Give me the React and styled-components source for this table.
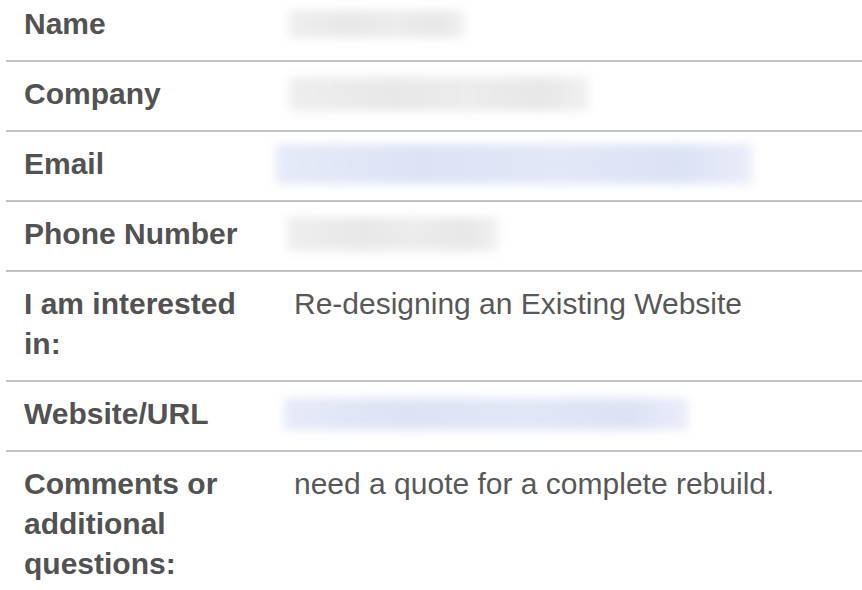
import React from "react";
import styled, { createGlobalStyle } from "styled-components";

const GlobalStyle = createGlobalStyle`
  html, body {
    margin: 0;
    padding: 0;
    background: #ffffff;
    overflow: hidden;
  }
  * {
    box-sizing: border-box;
  }
`;

const Table = styled.div`
  margin: -8px 0 0 6px;
  width: 880px;
  font-family: "Liberation Sans", Arial, Helvetica, sans-serif;
  font-size: 30px;
  line-height: 40px;
  color: #555555;
`;

const Row = styled.div`
  display: grid;
  grid-template-columns: 270px 1fr;
  border-bottom: 2px solid #c2c2c2;
`;

const Label = styled.div`
  padding: 12px 20px 16px 18px;
  font-weight: 700;
  color: #525252;
`;

const Value = styled.div`
  padding: 12px 20px 16px 18px;
  font-weight: 400;
  color: #585858;
`;

const Redacted = styled.div`
  height: 40px;
  display: flex;
  align-items: center;
  margin-left: ${(p) => p.$shift || 0}px;
`;

const Smudge = styled.div`
  width: ${(p) => p.$width}px;
  height: ${(p) => p.$height || 28}px;
  border-radius: 4px;
  background: ${(p) =>
    p.$link
      ? "linear-gradient(90deg, #e6eaf8 0%, #dde3f5 30%, #e2e7f7 60%, #dce2f5 85%, #eaedf9 100%)"
      : "linear-gradient(90deg, #eeeeee 0%, #e8e8e8 35%, #ececec 60%, #e7e7e7 85%, #f1f1f1 100%)"};
  filter: blur(5px);
`;

const rows = [
  { label: "Name", blur: { width: 176, shift: -5 } },
  { label: "Company", blur: { width: 300, shift: -5, height: 34 } },
  { label: "Email", blur: { width: 476, shift: -18, height: 40, link: true } },
  { label: "Phone Number", blur: { width: 212, shift: -7, height: 34 } },
  { label: "I am interested in:", text: "Re-designing an Existing Website" },
  { label: "Website/URL", blur: { width: 404, shift: -10, height: 32, link: true } },
  {
    label: "Comments or additional questions:",
    text: "need a quote for a complete rebuild.",
  },
];

export default function App() {
  return (
    <>
      <GlobalStyle />
      <Table>
        {rows.map((r) => (
          <Row key={r.label}>
            <Label>{r.label}</Label>
            <Value>
              {r.text ? (
                r.text
              ) : (
                <Redacted $shift={r.blur.shift}>
                  <Smudge
                    $width={r.blur.width}
                    $height={r.blur.height}
                    $link={r.blur.link}
                  />
                </Redacted>
              )}
            </Value>
          </Row>
        ))}
      </Table>
    </>
  );
}
